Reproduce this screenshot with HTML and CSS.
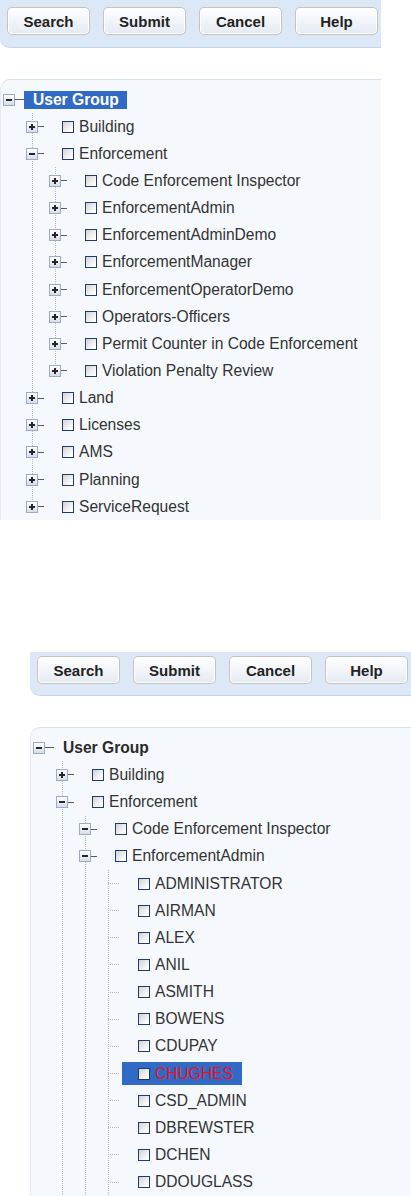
FILE: index.html
```html
<!DOCTYPE html>
<html>
<head>
<meta charset="utf-8">
<title>User Group</title>
<link rel="stylesheet" href="styles.css">
</head>
<body>
<div class="section s1">
  <div class="toolbar">
    <button class="btn">Search</button>
    <button class="btn">Submit</button>
    <button class="btn">Cancel</button>
    <button class="btn">Help</button>
  </div>
  <div class="panel">
    <div class="row l0"><span class="twig root"><i class="exp minus"></i></span><span class="label rootlabel sel">User Group</span></div>
    <div class="kids k1">
      <div class="row l1"><span class="twig"><i class="exp plus"></i></span><span class="label"><i class="cb"></i>Building</span></div>
      <div class="row l1"><span class="twig"><i class="exp minus"></i></span><span class="label"><i class="cb"></i>Enforcement</span></div>
      <div class="kids k2">
        <div class="row l2"><span class="twig"><i class="exp plus"></i></span><span class="label"><i class="cb"></i>Code Enforcement Inspector</span></div>
        <div class="row l2"><span class="twig"><i class="exp plus"></i></span><span class="label"><i class="cb"></i>EnforcementAdmin</span></div>
        <div class="row l2"><span class="twig"><i class="exp plus"></i></span><span class="label"><i class="cb"></i>EnforcementAdminDemo</span></div>
        <div class="row l2"><span class="twig"><i class="exp plus"></i></span><span class="label"><i class="cb"></i>EnforcementManager</span></div>
        <div class="row l2"><span class="twig"><i class="exp plus"></i></span><span class="label"><i class="cb"></i>EnforcementOperatorDemo</span></div>
        <div class="row l2"><span class="twig"><i class="exp plus"></i></span><span class="label"><i class="cb"></i>Operators-Officers</span></div>
        <div class="row l2"><span class="twig"><i class="exp plus"></i></span><span class="label"><i class="cb"></i>Permit Counter in Code Enforcement</span></div>
        <div class="row l2"><span class="twig"><i class="exp plus"></i></span><span class="label"><i class="cb"></i>Violation Penalty Review</span></div>
      </div>
      <div class="row l1"><span class="twig"><i class="exp plus"></i></span><span class="label"><i class="cb"></i>Land</span></div>
      <div class="row l1"><span class="twig"><i class="exp plus"></i></span><span class="label"><i class="cb"></i>Licenses</span></div>
      <div class="row l1"><span class="twig"><i class="exp plus"></i></span><span class="label"><i class="cb"></i>AMS</span></div>
      <div class="row l1"><span class="twig"><i class="exp plus"></i></span><span class="label"><i class="cb"></i>Planning</span></div>
      <div class="row l1"><span class="twig"><i class="exp plus"></i></span><span class="label"><i class="cb"></i>ServiceRequest</span></div>
    </div>
  </div>
</div>

<div class="section s2">
  <div class="toolbar">
    <button class="btn">Search</button>
    <button class="btn">Submit</button>
    <button class="btn">Cancel</button>
    <button class="btn">Help</button>
  </div>
  <div class="panel">
    <div class="row l0"><span class="twig root"><i class="exp minus"></i></span><span class="label rootlabel">User Group</span></div>
    <div class="kids k1 cont">
      <div class="row l1"><span class="twig"><i class="exp plus"></i></span><span class="label"><i class="cb"></i>Building</span></div>
      <div class="row l1"><span class="twig"><i class="exp minus"></i></span><span class="label"><i class="cb"></i>Enforcement</span></div>
      <div class="kids k2 cont">
        <div class="row l2"><span class="twig"><i class="exp minus"></i></span><span class="label"><i class="cb"></i>Code Enforcement Inspector</span></div>
        <div class="row l2"><span class="twig"><i class="exp minus"></i></span><span class="label"><i class="cb"></i>EnforcementAdmin</span></div>
        <div class="kids k3 cont">
          <div class="row l3"><span class="twig leaf"></span><span class="label"><i class="cb"></i>ADMINISTRATOR</span></div>
          <div class="row l3"><span class="twig leaf"></span><span class="label"><i class="cb"></i>AIRMAN</span></div>
          <div class="row l3"><span class="twig leaf"></span><span class="label"><i class="cb"></i>ALEX</span></div>
          <div class="row l3"><span class="twig leaf"></span><span class="label"><i class="cb"></i>ANIL</span></div>
          <div class="row l3"><span class="twig leaf"></span><span class="label"><i class="cb"></i>ASMITH</span></div>
          <div class="row l3"><span class="twig leaf"></span><span class="label"><i class="cb"></i>BOWENS</span></div>
          <div class="row l3"><span class="twig leaf"></span><span class="label"><i class="cb"></i>CDUPAY</span></div>
          <div class="row l3"><span class="twig leaf"></span><span class="label sel red"><i class="cb"></i>CHUGHES</span></div>
          <div class="row l3"><span class="twig leaf"></span><span class="label"><i class="cb"></i>CSD_ADMIN</span></div>
          <div class="row l3"><span class="twig leaf"></span><span class="label"><i class="cb"></i>DBREWSTER</span></div>
          <div class="row l3"><span class="twig leaf"></span><span class="label"><i class="cb"></i>DCHEN</span></div>
          <div class="row l3"><span class="twig leaf"></span><span class="label"><i class="cb"></i>DDOUGLASS</span></div>
        </div>
      </div>
    </div>
  </div>
</div>
</body>
</html>
```

FILE: styles.css
```css
html, body {
  margin: 0;
  padding: 0;
  background: #ffffff;
}

body {
  font-family: "Liberation Sans", Arial, sans-serif;
  font-size: 15.6px;
  color: #333333;
}

.section {
  width: 381px;
}

.s2 {
  margin-left: 30px;
  margin-top: 132px;
}

.toolbar {
  display: flex;
  gap: 13px;
  background: #dce8f5;
  border-bottom: 1px solid #c3d5ea;
  border-bottom-left-radius: 10px;
  box-sizing: border-box;
}

.s1 .toolbar {
  padding: 7px 0 12px 7px;
}

.s2 .toolbar {
  padding: 4px 0 11px 7px;
}

.btn {
  width: 83px;
  height: 28px;
  margin: 0;
  padding: 0;
  border: 1px solid #c4c4c4;
  border-radius: 5px;
  background: linear-gradient(#ffffff, #f3f6fa 45%, #e4eaf2);
  box-shadow: inset 0 0 0 1px #ffffff;
  font-family: "Liberation Sans", Arial, sans-serif;
  font-size: 15px;
  font-weight: bold;
  color: #222222;
}

.panel {
  margin-top: 31px;
  background: #f5f9fd;
  border-top: 1px solid #d9e3ee;
  border-left: 1px solid #e3eaf2;
  border-top-left-radius: 10px;
  padding-top: 6px;
  box-sizing: border-box;
}

.row {
  display: flex;
  align-items: center;
  height: 27.15px;
  white-space: nowrap;
  box-sizing: border-box;
}

.l0 { padding-left: 2px; }
.l1 { padding-left: 25px; }
.l2 { padding-left: 48px; }
.l3 { padding-left: 71px; }

.kids {
  background-repeat: no-repeat;
}

.k1 {
  background-image: linear-gradient(#f5f9fd, #f5f9fd), repeating-linear-gradient(to bottom, #b9b9b9 0 1px, transparent 1px 2px);
  background-position: 31px 100%, 31px 0;
  background-size: 1px 13px, 1px 100%;
}

.k2 {
  background-image: linear-gradient(#f5f9fd, #f5f9fd), repeating-linear-gradient(to bottom, #b9b9b9 0 1px, transparent 1px 2px);
  background-position: 54px 100%, 54px 0;
  background-size: 1px 13px, 1px 100%;
}

.k3 {
  background-image: linear-gradient(#f5f9fd, #f5f9fd), repeating-linear-gradient(to bottom, #b9b9b9 0 1px, transparent 1px 2px);
  background-position: 77px 100%, 77px 0;
  background-size: 1px 13px, 1px 100%;
}

.kids.cont {
  background-size: 0 0, 1px 100%;
}

.k3.cont {
  padding-bottom: 20px;
}

.twig {
  display: flex;
  align-items: center;
  flex: none;
  width: 20px;
  height: 13px;
  background: linear-gradient(#5a5a5a, #5a5a5a) 12px 50% / 6px 1px no-repeat;
}

.twig.root {
  background-size: 9px 1px;
  width: 21px;
}

.twig.leaf {
  background: repeating-linear-gradient(to right, #b9b9b9 0 1px, transparent 1px 2px) 6px 50% / 12px 1px no-repeat;
}

.exp {
  display: block;
  width: 12px;
  height: 12px;
  box-sizing: border-box;
  border: 1px solid #9aabc7;
}

.exp.plus {
  background:
    linear-gradient(#262626, #262626) 50% 50% / 6px 2px no-repeat,
    linear-gradient(#262626, #262626) 50% 50% / 2px 6px no-repeat,
    linear-gradient(#ffffff, #d6dde8);
}

.exp.minus {
  background:
    linear-gradient(#262626, #262626) 50% 50% / 6px 2px no-repeat,
    linear-gradient(#ffffff, #d6dde8);
}

.label {
  display: flex;
  align-items: center;
  height: 23px;
  padding: 0 9px 0 3px;
  box-sizing: border-box;
  color: #333333;
}

.rootlabel {
  height: 18px;
  padding: 0 8px 0 9px;
  font-weight: bold;
  color: #2a2a2a;
}

.cb {
  display: block;
  flex: none;
  width: 12px;
  height: 12px;
  box-sizing: border-box;
  margin: 0 5px 0 13px;
  border: 1px solid #1f3d68;
  background: linear-gradient(135deg, #d2d2d2, #ffffff 85%);
}

.sel {
  background: #316ac5;
  color: #ffffff;
}

.sel.red {
  color: #ee1122;
}
```
